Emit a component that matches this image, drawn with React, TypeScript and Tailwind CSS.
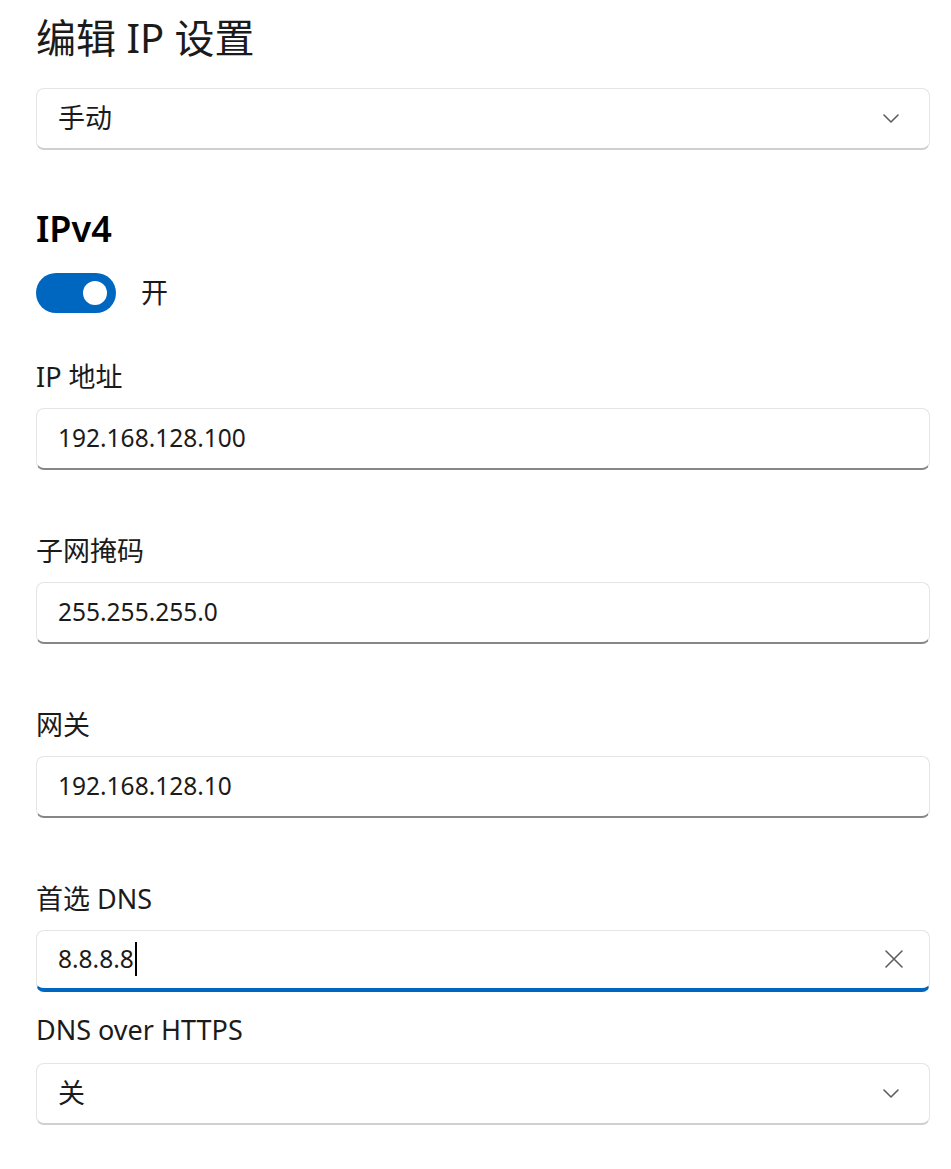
import React from "react";

const font = { fontFamily: '"Noto Sans", "Noto Sans CJK SC", sans-serif' };

const Chevron = () => (
	<svg width="16" height="9" viewBox="0 0 16 9" fill="none">
		<path d="M1 1l7 7 7-7" stroke="#5d5d5d" strokeWidth="1.6" strokeLinecap="round" strokeLinejoin="round" />
	</svg>
);

const Dropdown = ({ value }: { value: string }) => (
	<div className="h-[62px] rounded-[8px] border border-[#e5e5e5] border-b-[#cfcfcf] border-b-2 bg-white flex items-center justify-between pl-[21px] pr-[30px]">
		<span className="text-[27px] text-[#1b1b1b]">{value}</span>
		<Chevron />
	</div>
);

const Field = ({ label, value, focused }: { label: string; value: string; focused?: boolean }) => (
	<div className="flex flex-col">
		<div className="mt-[61px] h-[40px] leading-[40px] text-[27px] text-[#1b1b1b]">{label}</div>
		<div
			className={
				focused
					? "mt-[11px] h-[62px] rounded-[8px] border border-[#e5e5e5] border-b-4 border-b-[#0067c0] bg-white flex items-center justify-between pl-[21px] pr-[26px]"
					: "mt-[11px] h-[62px] rounded-[8px] border border-[#e5e5e5] border-b-2 border-b-[#868686] bg-white flex items-center pl-[21px]"
			}
		>
			<span className="text-[24.5px] text-[#1b1b1b] flex items-center">
				{value}
				{focused && <span className="inline-block ml-[1px] w-[2px] h-[34px] bg-black" />}
			</span>
			{focused && (
				<svg width="18" height="18" viewBox="0 0 18 18" fill="none">
					<path d="M1 1l16 16M17 1L1 17" stroke="#5d5d5d" strokeWidth="1.6" strokeLinecap="round" />
				</svg>
			)}
		</div>
	</div>
);

export default function App() {
	return (
		<div className="min-h-screen bg-white pl-[36px] pr-[21px] pt-[12px]" style={font}>
			<h1 className="h-[52px] leading-[52px] text-[40px] text-[#1b1b1b]">编辑 IP 设置</h1>
			<div className="mt-[24px]">
				<Dropdown value="手动" />
			</div>

			<h2 className="mt-[53px] h-[52px] leading-[52px] text-[36px] font-semibold text-black">IPv4</h2>
			<div className="mt-[18px] flex items-center gap-[25px]">
				<div className="w-[80px] h-[40px] rounded-full bg-[#0067c0] flex items-center justify-end pr-[9px]">
					<div className="w-[24px] h-[24px] rounded-full bg-white" />
				</div>
				<span className="text-[27px] text-[#1b1b1b]">开</span>
			</div>

			<div className="-mt-[18px]">
				<Field label="IP 地址" value="192.168.128.100" />
			</div>
			<Field label="子网掩码" value="255.255.255.0" />
			<Field label="网关" value="192.168.128.10" />
			<Field label="首选 DNS" value="8.8.8.8" focused />

			<div className="mt-[18px] h-[40px] leading-[40px] text-[27px] text-[#1b1b1b]">DNS over HTTPS</div>
			<div className="mt-[13px]">
				<Dropdown value="关" />
			</div>
		</div>
	);
}
